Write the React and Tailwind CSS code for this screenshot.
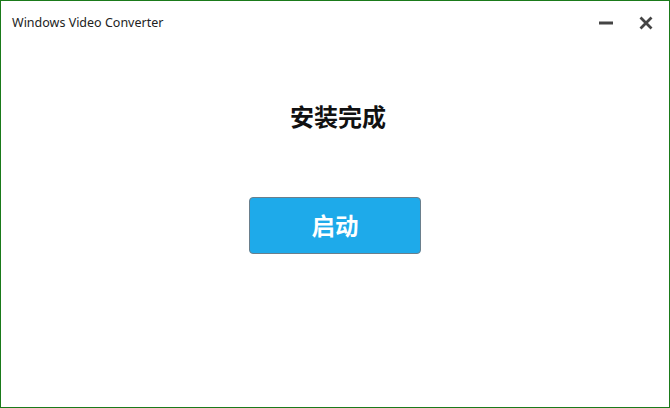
export default function App() {
  return (
    <div className="w-[670px] h-[408px] bg-white border border-[#1a7a1a] flex flex-col" style={{ fontFamily: '"Noto Sans CJK SC", "Noto Sans", sans-serif' }}>
      <div className="h-[44px] flex items-center justify-between pl-[11px] pr-[16px] shrink-0">
        <span className="text-[12.5px] text-[#222]" style={{ fontFamily: '"Noto Sans", "Noto Sans CJK SC", sans-serif' }}>Windows Video Converter</span>
        <div className="flex items-center gap-[26px]">
          <svg width="14" height="14" viewBox="0 0 14 14"><rect x="0" y="5.5" width="14" height="3" fill="#444" /></svg>
          <svg width="14" height="14" viewBox="0 0 14 14"><path d="M1.5 1.5 L12.5 12.5 M12.5 1.5 L1.5 12.5" stroke="#444" strokeWidth="2.8" /></svg>
        </div>
      </div>
      <div className="flex flex-col items-center">
        <h1 className="mt-[51px] ml-[6px] text-[24px] font-bold text-[#111] leading-[40px]">安装完成</h1>
        <button className="mt-[61px] w-[172px] h-[57px] bg-[#1eaaea] border border-[#6a7f8c] rounded-[4px] text-white text-[23.5px] font-bold">启动</button>
      </div>
    </div>
  );
}
